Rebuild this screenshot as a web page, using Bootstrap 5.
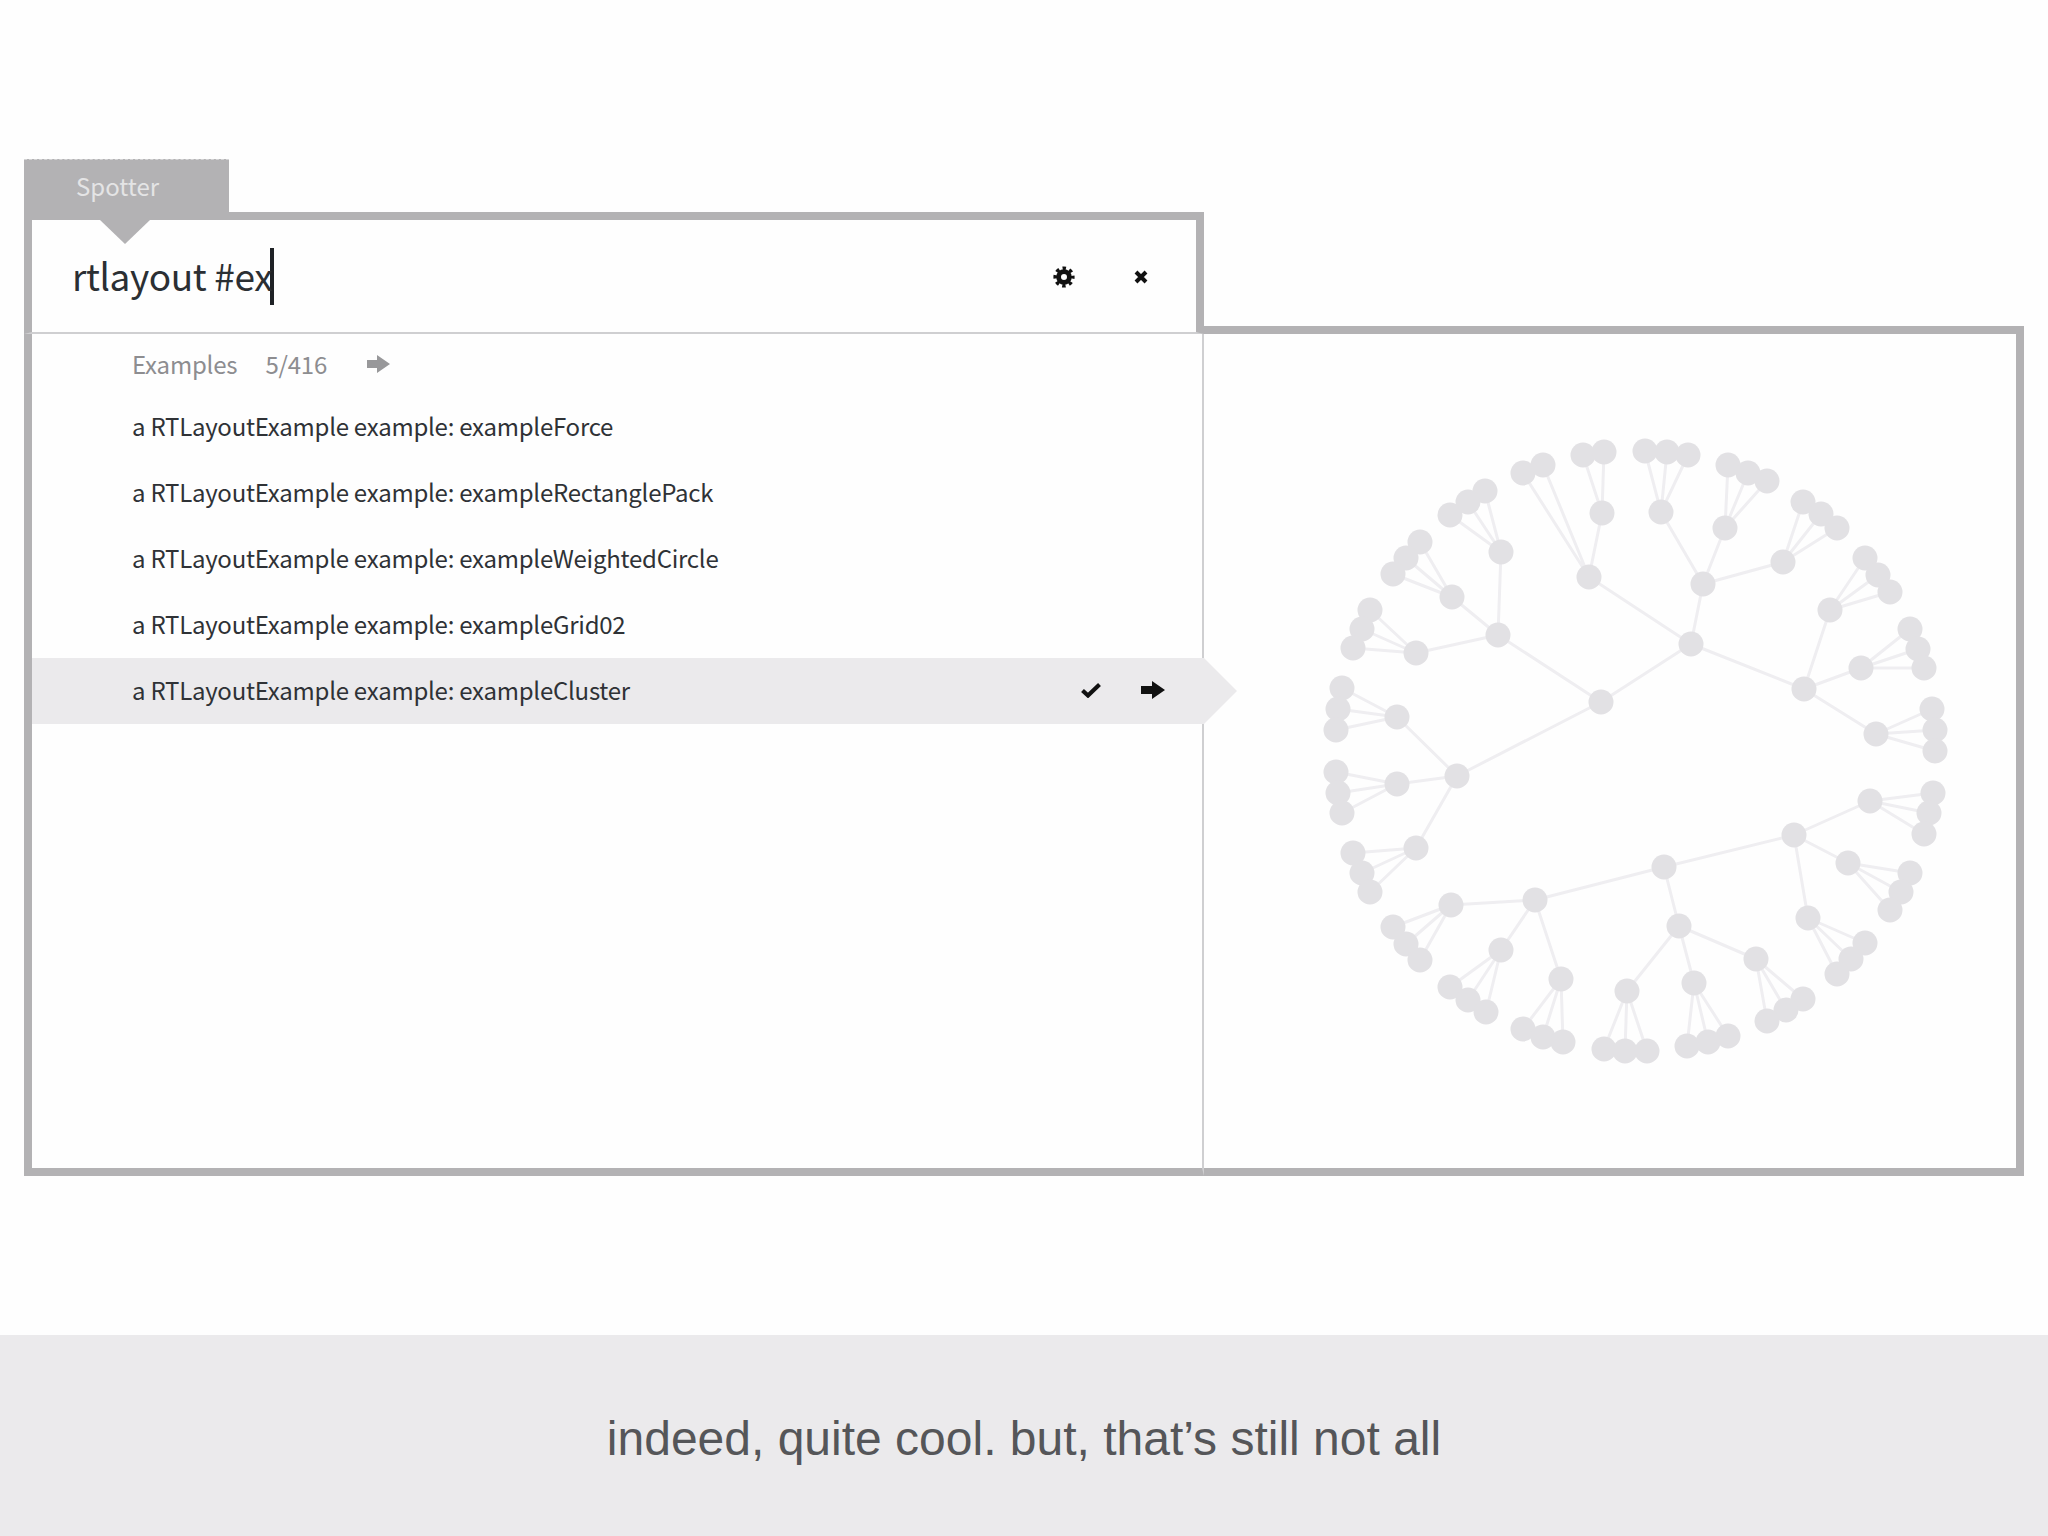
<!DOCTYPE html>
<html lang="en">
<head>
<meta charset="utf-8">
<title>Spotter</title>
<link href="https://cdn.jsdelivr.net/npm/bootstrap@5.3.0/dist/css/bootstrap.min.css" rel="stylesheet">
<style>
:root{--frame:#b3b2b4;--hair:#cfcfd1;--wash:#ebeaec;}
html,body{height:100%;}
body{background:#fefefe;width:2048px;height:1536px;overflow:hidden;font-family:"Noto Sans CJK SC","Noto Sans",sans-serif;}
.stage{height:1335px;padding:159px 24px 0;}
.left-col{width:1180px;height:1017px;}
.right-col{width:820px;height:1017px;padding-top:167px;}
.tab-head{width:205px;height:53px;background:var(--frame);color:#e4e4e5;font-size:24px;line-height:52px;padding-left:52px;border-top:1px dashed #d4d4d5;}
.search-box{height:122px;border:solid var(--frame);border-width:8px 8px 2px 8px;border-bottom-color:var(--hair);padding-left:40px;position:relative;}
.search-box::before{content:"";position:absolute;left:68px;top:0;border:solid transparent;border-width:24px 25px 0;border-top-color:var(--frame);}
.search-text{font-size:37px;line-height:1;color:#2b2f33;letter-spacing:-.4px;}
.search-text>span:first-child{position:relative;top:-1px;}
.caret-bar{display:inline-block;width:4px;height:57px;background:#1f2226;margin-left:-2px;}
.search-icons{gap:59px;padding-right:48px;padding-top:2px;}
.result-pane{height:842px;border:solid var(--frame);border-width:0 0 8px 8px;border-right:2px solid var(--hair);border-bottom:8px solid var(--frame);}
.group-head{height:60px;padding-left:100px;font-size:24px;letter-spacing:-.2px;color:#8d8d90;gap:28px;padding-bottom:1px;}
.group-head .arrow-gap{margin-left:12px;}
.result-list{border-radius:0;}
.result-item{height:66px;padding:0 39px 2px 100px;border:0;background:transparent;font-size:24px;letter-spacing:-.25px;color:#2f3236;}
.result-item.picked{background:var(--wash);margin-right:-2px;position:relative;z-index:2;gap:40px;}
.result-item.picked::after{content:"";position:absolute;left:100%;top:0;border:solid transparent;border-width:33px 0 33px 33px;border-left-color:var(--wash);}
.preview-pane{height:850px;border:solid var(--frame);border-width:8px 8px 8px 0;}
.tree-svg{display:block;width:812px;height:834px;}
.tree-links{fill:none;stroke:#efeef1;stroke-width:3;}
.tree-nodes{fill:#e2e1e4;}
.caption-bar{height:201px;background:var(--wash);color:#555659;font-family:"Liberation Sans",Arial,sans-serif;font-size:48px;padding-top:6px;}
</style>
</head>
<body>
<div class="stage d-flex align-items-start">
  <div class="left-col d-flex flex-column">
    <div class="tab-head">Spotter</div>
    <div class="search-box d-flex align-items-center justify-content-between">
      <div class="search-text d-flex align-items-center"><span>rtlayout #ex</span><span class="caret-bar"></span></div>
      <div class="search-icons d-flex align-items-center">
        <svg width="22" height="22" viewBox="0 0 22 22" aria-label="settings"><circle cx="11" cy="11" r="5.400" fill="none" stroke="#111" stroke-width="4.800"/><circle cx="11" cy="11" r="8.800" fill="none" stroke="#111" stroke-width="3.600" stroke-dasharray="3.400 3.510" stroke-dashoffset="1.700"/></svg>
        <svg width="14" height="14" viewBox="0 0 14 14" aria-label="close"><path d="M2 2L12 12M12 2L2 12" stroke="#111" stroke-width="4" fill="none"/></svg>
      </div>
    </div>
    <div class="result-pane">
      <div class="group-head d-flex align-items-center">
        <span>Examples</span><span>5/416</span>
        <svg class="arrow-gap" width="23" height="18" viewBox="0 0 23 18" aria-label="open"><path d="M0 5H10V0L23 9L10 18V13H0Z" fill="#98989a"/></svg>
      </div>
      <div class="list-group result-list">
        <div class="list-group-item result-item d-flex align-items-center">a RTLayoutExample example: exampleForce</div>
        <div class="list-group-item result-item d-flex align-items-center">a RTLayoutExample example: exampleRectanglePack</div>
        <div class="list-group-item result-item d-flex align-items-center">a RTLayoutExample example: exampleWeightedCircle</div>
        <div class="list-group-item result-item d-flex align-items-center">a RTLayoutExample example: exampleGrid02</div>
        <div class="list-group-item result-item picked d-flex align-items-center">
          <span class="me-auto">a RTLayoutExample example: exampleCluster</span>
          <svg width="20" height="16" viewBox="0 0 20 16" aria-label="selected"><path d="M1.500 8.500L7 13.500L18.500 2.500" fill="none" stroke="#111" stroke-width="4.200"/></svg>
          <svg width="24" height="18" viewBox="0 0 24 18" aria-label="go"><path d="M0 5H11V0L24 9L11 18V13H0Z" fill="#111"/></svg>
        </div>
      </div>
    </div>
  </div>
  <div class="right-col">
    <div class="preview-pane">
      <svg class="tree-svg" viewBox="1204 334 812 834" role="img" aria-label="cluster layout">
        <path class="tree-links" d="M1601 702L1457 776M1601 702L1498 635M1601 702L1691 644
M1498 635L1501 552M1498 635L1452 597M1498 635L1416 653
M1501 552L1485 491M1501 552L1468 502M1501 552L1450 515
M1452 597L1420 542M1452 597L1406 558M1452 597L1393 574
M1416 653L1370 610M1416 653L1362 629M1416 653L1353 648
M1691 644L1589 577M1691 644L1703 584M1691 644L1804 689
M1589 577L1523 473M1589 577L1543 465M1589 577L1602 513
M1602 513L1583 455M1602 513L1604 452
M1703 584L1661 512M1703 584L1725 528M1703 584L1783 562
M1661 512L1645 451M1661 512L1667 452M1661 512L1688 455
M1725 528L1728 465M1725 528L1748 473M1725 528L1767 481
M1783 562L1803 502M1783 562L1821 514M1783 562L1837 528
M1804 689L1830 610M1804 689L1861 668M1804 689L1876 734
M1830 610L1865 558M1830 610L1878 575M1830 610L1890 592
M1861 668L1910 629M1861 668L1918 649M1861 668L1924 668
M1876 734L1932 709M1876 734L1935 730M1876 734L1935 751
M1457 776L1397 717M1457 776L1397 784M1457 776L1416 848
M1397 717L1342 688M1397 717L1338 709M1397 717L1336 730
M1397 784L1336 772M1397 784L1338 793M1397 784L1342 813
M1416 848L1353 853M1416 848L1362 873M1416 848L1370 892
M1664 867L1535 900M1664 867L1679 926M1664 867L1794 835
M1535 900L1451 905M1535 900L1501 950M1535 900L1561 979
M1451 905L1393 927M1451 905L1406 944M1451 905L1420 960
M1501 950L1450 987M1501 950L1468 1000M1501 950L1486 1012
M1561 979L1523 1029M1561 979L1543 1037M1561 979L1563 1042
M1679 926L1627 991M1679 926L1694 983M1679 926L1756 959
M1627 991L1604 1049M1627 991L1625 1051M1627 991L1647 1051
M1694 983L1728 1036M1694 983L1708 1042M1694 983L1687 1046
M1756 959L1803 999M1756 959L1786 1010M1756 959L1767 1021
M1794 835L1870 801M1794 835L1848 863M1794 835L1808 918
M1870 801L1933 793M1870 801L1929 813M1870 801L1924 834
M1848 863L1910 873M1848 863L1901 892M1848 863L1890 910
M1808 918L1865 943M1808 918L1851 959M1808 918L1837 974"/>
        <g class="tree-nodes">
          <circle cx="1601" cy="702" r="12.500"/><circle cx="1457" cy="776" r="12.500"/><circle cx="1498" cy="635" r="12.500"/><circle cx="1691" cy="644" r="12.500"/>
          <circle cx="1501" cy="552" r="12.500"/><circle cx="1452" cy="597" r="12.500"/><circle cx="1416" cy="653" r="12.500"/>
          <circle cx="1485" cy="491" r="12.500"/><circle cx="1468" cy="502" r="12.500"/><circle cx="1450" cy="515" r="12.500"/>
          <circle cx="1420" cy="542" r="12.500"/><circle cx="1406" cy="558" r="12.500"/><circle cx="1393" cy="574" r="12.500"/>
          <circle cx="1370" cy="610" r="12.500"/><circle cx="1362" cy="629" r="12.500"/><circle cx="1353" cy="648" r="12.500"/>
          <circle cx="1589" cy="577" r="12.500"/><circle cx="1703" cy="584" r="12.500"/><circle cx="1804" cy="689" r="12.500"/>
          <circle cx="1523" cy="473" r="12.500"/><circle cx="1543" cy="465" r="12.500"/><circle cx="1602" cy="513" r="12.500"/>
          <circle cx="1583" cy="455" r="12.500"/><circle cx="1604" cy="452" r="12.500"/>
          <circle cx="1661" cy="512" r="12.500"/><circle cx="1725" cy="528" r="12.500"/><circle cx="1783" cy="562" r="12.500"/>
          <circle cx="1645" cy="451" r="12.500"/><circle cx="1667" cy="452" r="12.500"/><circle cx="1688" cy="455" r="12.500"/>
          <circle cx="1728" cy="465" r="12.500"/><circle cx="1748" cy="473" r="12.500"/><circle cx="1767" cy="481" r="12.500"/>
          <circle cx="1803" cy="502" r="12.500"/><circle cx="1821" cy="514" r="12.500"/><circle cx="1837" cy="528" r="12.500"/>
          <circle cx="1830" cy="610" r="12.500"/><circle cx="1861" cy="668" r="12.500"/><circle cx="1876" cy="734" r="12.500"/>
          <circle cx="1865" cy="558" r="12.500"/><circle cx="1878" cy="575" r="12.500"/><circle cx="1890" cy="592" r="12.500"/>
          <circle cx="1910" cy="629" r="12.500"/><circle cx="1918" cy="649" r="12.500"/><circle cx="1924" cy="668" r="12.500"/>
          <circle cx="1932" cy="709" r="12.500"/><circle cx="1935" cy="730" r="12.500"/><circle cx="1935" cy="751" r="12.500"/>
          <circle cx="1397" cy="717" r="12.500"/><circle cx="1397" cy="784" r="12.500"/><circle cx="1416" cy="848" r="12.500"/>
          <circle cx="1342" cy="688" r="12.500"/><circle cx="1338" cy="709" r="12.500"/><circle cx="1336" cy="730" r="12.500"/>
          <circle cx="1336" cy="772" r="12.500"/><circle cx="1338" cy="793" r="12.500"/><circle cx="1342" cy="813" r="12.500"/>
          <circle cx="1353" cy="853" r="12.500"/><circle cx="1362" cy="873" r="12.500"/><circle cx="1370" cy="892" r="12.500"/>
          <circle cx="1664" cy="867" r="12.500"/><circle cx="1535" cy="900" r="12.500"/><circle cx="1679" cy="926" r="12.500"/><circle cx="1794" cy="835" r="12.500"/>
          <circle cx="1451" cy="905" r="12.500"/><circle cx="1501" cy="950" r="12.500"/><circle cx="1561" cy="979" r="12.500"/>
          <circle cx="1393" cy="927" r="12.500"/><circle cx="1406" cy="944" r="12.500"/><circle cx="1420" cy="960" r="12.500"/>
          <circle cx="1450" cy="987" r="12.500"/><circle cx="1468" cy="1000" r="12.500"/><circle cx="1486" cy="1012" r="12.500"/>
          <circle cx="1523" cy="1029" r="12.500"/><circle cx="1543" cy="1037" r="12.500"/><circle cx="1563" cy="1042" r="12.500"/>
          <circle cx="1627" cy="991" r="12.500"/><circle cx="1694" cy="983" r="12.500"/><circle cx="1756" cy="959" r="12.500"/>
          <circle cx="1604" cy="1049" r="12.500"/><circle cx="1625" cy="1051" r="12.500"/><circle cx="1647" cy="1051" r="12.500"/>
          <circle cx="1728" cy="1036" r="12.500"/><circle cx="1708" cy="1042" r="12.500"/><circle cx="1687" cy="1046" r="12.500"/>
          <circle cx="1803" cy="999" r="12.500"/><circle cx="1786" cy="1010" r="12.500"/><circle cx="1767" cy="1021" r="12.500"/>
          <circle cx="1870" cy="801" r="12.500"/><circle cx="1848" cy="863" r="12.500"/><circle cx="1808" cy="918" r="12.500"/>
          <circle cx="1933" cy="793" r="12.500"/><circle cx="1929" cy="813" r="12.500"/><circle cx="1924" cy="834" r="12.500"/>
          <circle cx="1910" cy="873" r="12.500"/><circle cx="1901" cy="892" r="12.500"/><circle cx="1890" cy="910" r="12.500"/>
          <circle cx="1865" cy="943" r="12.500"/><circle cx="1851" cy="959" r="12.500"/><circle cx="1837" cy="974" r="12.500"/>
        </g>
      </svg>
    </div>
  </div>
</div>
<div class="caption-bar d-flex align-items-center justify-content-center">indeed, quite cool. but, that’s still not all</div>
<script src="https://cdn.jsdelivr.net/npm/bootstrap@5.3.0/dist/js/bootstrap.bundle.min.js"></script>
</body>
</html>
